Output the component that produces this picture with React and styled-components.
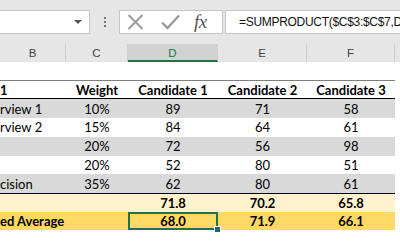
import styled, { createGlobalStyle } from "styled-components"

const GlobalStyle = createGlobalStyle`
  html, body {
    margin: 0;
    padding: 0;
    background: #fff;
    overflow: hidden;
  }
  body {
    width: 400px;
    height: 250px;
    font-family: "Lato", "Liberation Sans", sans-serif;
  }
`

const cols = [66, 62, 90, 89, 88]

const rows = [
    { label: "rview 1", weight: "10%", vals: [89, 71, 58], shade: true },
    { label: "rview 2", weight: "15%", vals: [84, 64, 61] },
    { label: "", weight: "20%", vals: [72, 56, 98], shade: true },
    { label: "", weight: "20%", vals: [52, 80, 51] },
    { label: "cision", weight: "35%", vals: [62, 80, 61], shade: true },
]

export default function App() {
    return (
        <Page>
            <GlobalStyle />
            <FormulaBar>
                <NameBox>
                    <Caret />
                </NameBox>
                <Grip>
                    <i /><i /><i />
                </Grip>
                <FxBox>
                    <svg width="17" height="16" viewBox="0 0 17 16">
                        <path d="M1.5 1 L15.5 15 M15.5 1 L1.5 15" stroke="#9b9b9b" strokeWidth="2" fill="none" />
                    </svg>
                    <svg width="19" height="16" viewBox="0 0 19 16">
                        <path d="M1 8.5 L6.5 14 L18 1.5" stroke="#9b9b9b" strokeWidth="2.4" fill="none" />
                    </svg>
                    <Fx>fx</Fx>
                </FxBox>
                <Formula>=SUMPRODUCT($C$3:$C$7,D</Formula>
            </FormulaBar>

            <Headers>
                {["B", "C", "D", "E", "F"].map((l, i) => (
                    <ColHead key={l} $w={cols[i]} $active={l === "D"}>{l}</ColHead>
                ))}
                <ColHead $w={20} />
            </Headers>

            <BlankRow />

            <Table>
                <HeadRow>
                    <Cell $left>1</Cell>
                    <Cell>Weight</Cell>
                    <Cell>Candidate 1</Cell>
                    <Cell>Candidate 2</Cell>
                    <Cell>Candidate 3</Cell>
                </HeadRow>
                {rows.map((r, i) => (
                    <Row key={i} $shade={r.shade} $h={i % 2 ? 18.5 : 19}>
                        <Cell $left>{r.label}</Cell>
                        <Cell>{r.weight}</Cell>
                        {r.vals.map((v, j) => <Cell key={j}>{v}</Cell>)}
                    </Row>
                ))}
                <TotalRow>
                    <Cell />
                    <Cell />
                    <Cell>71.8</Cell>
                    <Cell>70.2</Cell>
                    <Cell>65.8</Cell>
                </TotalRow>
                <AvgRow>
                    <Cell $left>ed Average</Cell>
                    <Cell />
                    <Selected>
                        68.0
                        <Handle />
                    </Selected>
                    <Cell>71.9</Cell>
                    <Cell>66.1</Cell>
                </AvgRow>
            </Table>
        </Page>
    )
}

const Page = styled.div`
width:400px;
height:250px;
overflow:hidden;
background:#fff;
`

const FormulaBar = styled.div`
height:44px;
box-sizing:border-box;
padding-top:10px;
background:#e6e6e6;
display:flex;
align-items:flex-start;
`

const NameBox = styled.div`
width:90px;
height:24px;
box-sizing:border-box;
background:#fff;
border:1px solid #c6c6c6;
border-left:none;
display:flex;
align-items:center;
justify-content:flex-end;
padding-right:7px;
`

const Caret = styled.span`
width:0;
height:0;
border-left:4px solid transparent;
border-right:4px solid transparent;
border-top:4px solid #555;
`

const Grip = styled.div`
width:29px;
height:24px;
display:flex;
flex-direction:column;
align-items:center;
justify-content:center;
gap:2px;
i {
    display:block;
    width:2px;
    height:2px;
    background:#777;
}
`

const FxBox = styled.div`
width:104px;
height:24px;
box-sizing:border-box;
background:#fff;
border:1px solid #c6c6c6;
display:flex;
align-items:center;
padding-left:7px;
gap:17px;
`

const Fx = styled.span`
font-family:"Liberation Serif", serif;
font-style:italic;
font-size:19px;
color:#555;
margin-left:-3px;
letter-spacing:-0.5px;
`

const Formula = styled.div`
flex:1;
margin-left:2px;
height:24px;
box-sizing:border-box;
background:#fff;
border:1px solid #c6c6c6;
border-right:none;
padding-left:13px;
font-family:"Liberation Sans", sans-serif;
font-size:12px;
letter-spacing:-0.3px;
line-height:22px;
color:#111;
white-space:nowrap;
overflow:hidden;
`

const Headers = styled.div`
height:18px;
display:flex;
background:#e6e6e6;
`

const ColHead = styled.div`
flex:0 0 ${p => p.$w}px;
box-sizing:border-box;
border-right:1px solid #cfcfcf;
display:flex;
align-items:center;
justify-content:center;
font-family:"Liberation Sans", sans-serif;
font-size:11.5px;
color:${p => p.$active ? "#217346" : "#444"};
background:${p => p.$active ? "#d2d2d2" : "transparent"};
border-bottom:${p => p.$active ? "2px solid #217346" : "none"};
padding-top:${p => p.$active ? "2px" : "0"};
`

const BlankRow = styled.div`
height:18px;
`

const Table = styled.div`
width:395px;
`

const Row = styled.div`
display:grid;
grid-template-columns:${cols.map(c => c + "px").join(" ")};
height:${p => p.$h || 19}px;
background:${p => p.$shade ? "#d9d9d9" : "#fff"};
font-size:13px;
color:#000;
`

const HeadRow = styled(Row)`
height:19px;
box-sizing:border-box;
border-top:1px solid #7f7f7f;
border-bottom:1px solid #000;
font-weight:700;
`

const TotalRow = styled(Row)`
height:19px;
box-sizing:border-box;
border-top:1px solid #000;
background:#fff2cc;
font-weight:700;
`

const AvgRow = styled(Row)`
height:18px;
background:#ffd966;
font-weight:700;
`

const Cell = styled.div`
display:flex;
align-items:center;
justify-content:${p => p.$left ? "flex-start" : "center"};
white-space:nowrap;
overflow:hidden;
`

const Selected = styled(Cell)`
position:relative;
overflow:visible;
box-shadow:inset 0 0 0 2px #217346;
`

const Handle = styled.span`
position:absolute;
right:-3px;
bottom:-3px;
width:5px;
height:5px;
background:#217346;
border:1px solid #fff;
`
